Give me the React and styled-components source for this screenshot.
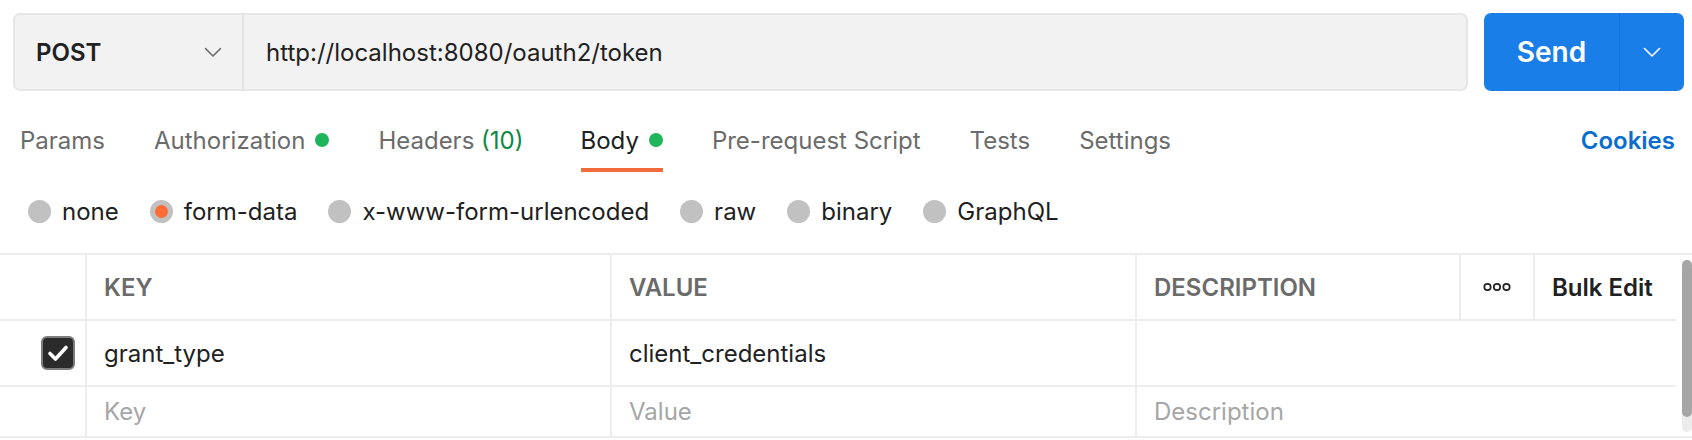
import React from 'react';
import styled, { createGlobalStyle } from 'styled-components';

const GlobalStyle = createGlobalStyle`
  html, body {
    margin: 0;
    padding: 0;
    background: #ffffff;
  }
  body {
    font-family: 'Inter', 'Noto Sans', sans-serif;
    color: #212121;
    overflow: hidden;
  }
`;

const Page = styled.div`
  width: 1692px;
  display: flex;
  flex-direction: column;
`;

const RequestBar = styled.div`
  display: flex;
  gap: 16px;
  padding: 13px 8px 0 13px;
  height: 78px;
`;

const UrlBox = styled.div`
  flex: 1;
  display: flex;
  background: #f2f2f2;
  border: 2px solid #e6e6e6;
  border-radius: 7px;
  box-sizing: border-box;
`;

const MethodSelect = styled.div`
  width: 229px;
  display: flex;
  align-items: center;
  justify-content: space-between;
  padding: 0 20px 0 21px;
  box-sizing: border-box;
  border-right: 2px solid #e3e3e3;
  font-size: 24px;
  font-weight: 600;
  color: #212121;
`;

const UrlText = styled.div`
  display: flex;
  align-items: center;
  padding-left: 22px;
  font-size: 24px;
  color: #212121;
`;

const SendButton = styled.div`
  width: 200px;
  display: flex;
  background: #1a7ee9;
  border-radius: 7px;
  color: #ffffff;
`;

const SendLabel = styled.div`
  width: 135px;
  display: flex;
  align-items: center;
  justify-content: center;
  font-size: 28px;
  font-weight: 600;
  border-right: 1px solid #1470d6;
`;

const SendMore = styled.div`
  flex: 1;
  display: flex;
  align-items: center;
  justify-content: center;
`;

const TabBar = styled.div`
  display: flex;
  align-items: stretch;
  height: 72px;
  margin-top: 9px;
  padding: 0 17px 0 20px;
`;

const Tab = styled.div`
  display: flex;
  align-items: center;
  gap: 10px;
  padding-top: 12px;
  margin-right: ${(p) => (p.wide ? 57 : 49)}px;
  font-size: 24px;
  color: ${(p) => (p.active ? '#212121' : '#6b6b6b')};
  border-bottom: 4px solid ${(p) => (p.active ? '#f26b3a' : 'transparent')};
  box-sizing: border-box;
`;

const Count = styled.span`
  color: #0b8a3e;
`;

const Dot = styled.span`
  width: 14px;
  height: 14px;
  border-radius: 50%;
  background: #1fb55b;
`;

const CookiesLink = styled.div`
  margin-left: auto;
  display: flex;
  align-items: center;
  padding-top: 12px;
  padding-bottom: 4px;
  font-size: 24px;
  font-weight: 600;
  color: #0b6dcf;
`;

const RadioRow = styled.div`
  display: flex;
  align-items: center;
  gap: 31px;
  height: 78px;
  padding: 0 0 3px 28px;
`;

const RadioOption = styled.div`
  display: flex;
  align-items: center;
  gap: 11px;
  font-size: 24px;
  color: #212121;
`;

const RadioCircle = styled.span`
  width: 23px;
  height: 23px;
  border-radius: 50%;
  background: ${(p) => (p.checked ? '#ff6c37' : '#c1c1c1')};
  border: ${(p) => (p.checked ? '5px solid #c1c1c1' : 'none')};
  box-sizing: border-box;
`;

const TableWrap = styled.div`
  display: flex;
  border-top: 2px solid #ededed;
  border-bottom: 2px solid #ededed;
`;

const Grid = styled.div`
  width: 1676px;
  display: grid;
  grid-template-columns: 85px 525px 525px 324px 74px 143px;
  grid-template-rows: 66px 66px 49px;
`;

const Cell = styled.div`
  display: flex;
  align-items: center;
  justify-content: ${(p) => (p.center ? 'center' : 'flex-start')};
  padding: ${(p) => (p.center ? '0' : '0 0 0 17px')};
  grid-column: ${(p) => (p.span ? `span ${p.span}` : 'auto')};
  border-left: ${(p) => (p.first ? 'none' : '2px solid #ededed')};
  border-bottom: ${(p) => (p.last ? 'none' : '2px solid #ededed')};
  font-size: 24px;
  color: #212121;
  box-sizing: border-box;
  overflow: hidden;
  white-space: nowrap;
`;

const HeadText = styled.span`
  font-weight: 600;
  color: ${(p) => (p.dark ? '#212121' : '#6b6b6b')};
`;

const Placeholder = styled.span`
  color: #a6a6a6;
`;

const CheckBox = styled.span`
  width: 34px;
  height: 34px;
  margin-left: 24px;
  border-radius: 6px;
  background: #2b2b2b;
  border: 2px solid #7d7d7d;
  box-sizing: border-box;
  display: flex;
  align-items: center;
  justify-content: center;
`;

const ScrollTrack = styled.div`
  flex: 1;
  display: flex;
  justify-content: flex-end;
  padding-top: 5px;
  padding-bottom: 4px;
`;

const ScrollRail = styled.div`
  width: 10px;
  height: 172px;
  background: #ececec;
  border-radius: 5px;
  display: flex;
`;

const ScrollThumb = styled.div`
  width: 10px;
  height: 157px;
  background: #a6a6a6;
  border-radius: 5px;
`;

const Chevron = ({ color, size = 18 }) => (
  <svg width={size} height={size / 2 + 2} viewBox="0 0 18 11" fill="none">
    <path d="M1.5 1.5 L9 9 L16.5 1.5" stroke={color} strokeWidth="1.6" strokeLinecap="round" strokeLinejoin="round" />
  </svg>
);

const Ellipsis = () => (
  <svg width="28" height="10" viewBox="0 0 28 10" fill="none">
    <circle cx="4.5" cy="5" r="3.2" stroke="#212121" strokeWidth="1.7" />
    <circle cx="14" cy="5" r="3.2" stroke="#212121" strokeWidth="1.7" />
    <circle cx="23.5" cy="5" r="3.2" stroke="#212121" strokeWidth="1.7" />
  </svg>
);

const Tick = () => (
  <svg width="22" height="18" viewBox="0 0 22 18" fill="none">
    <path d="M3 9.5 L8.5 15 L19 3.5" stroke="#ffffff" strokeWidth="3.6" strokeLinecap="round" strokeLinejoin="round" />
  </svg>
);

const tabs = [
  { label: 'Params' },
  { label: 'Authorization', dot: true },
  { label: 'Headers', count: '(10)', wide: true },
  { label: 'Body', dot: true, active: true },
  { label: 'Pre-request Script' },
  { label: 'Tests' },
  { label: 'Settings' },
];

const bodyTypes = ['none', 'form-data', 'x-www-form-urlencoded', 'raw', 'binary', 'GraphQL'];

export default function App() {
  return (
    <Page>
      <GlobalStyle />
      <RequestBar>
        <UrlBox>
          <MethodSelect>
            POST
            <Chevron color="#6b6b6b" />
          </MethodSelect>
          <UrlText>http://localhost:8080/oauth2/token</UrlText>
        </UrlBox>
        <SendButton>
          <SendLabel>Send</SendLabel>
          <SendMore>
            <Chevron color="#ffffff" />
          </SendMore>
        </SendButton>
      </RequestBar>

      <TabBar>
        {tabs.map((t) => (
          <Tab key={t.label} active={t.active} wide={t.wide}>
            <span>
              {t.label}
              {t.count && <Count> {t.count}</Count>}
            </span>
            {t.dot && <Dot />}
          </Tab>
        ))}
        <CookiesLink>Cookies</CookiesLink>
      </TabBar>

      <RadioRow>
        {bodyTypes.map((b) => (
          <RadioOption key={b}>
            <RadioCircle checked={b === 'form-data'} />
            {b}
          </RadioOption>
        ))}
      </RadioRow>

      <TableWrap>
        <Grid>
          <Cell first />
          <Cell><HeadText>KEY</HeadText></Cell>
          <Cell><HeadText>VALUE</HeadText></Cell>
          <Cell><HeadText>DESCRIPTION</HeadText></Cell>
          <Cell center><Ellipsis /></Cell>
          <Cell><HeadText dark>Bulk Edit</HeadText></Cell>

          <Cell first>
            <CheckBox><Tick /></CheckBox>
          </Cell>
          <Cell>grant_type</Cell>
          <Cell>client_credentials</Cell>
          <Cell span={3} />

          <Cell first last />
          <Cell last><Placeholder>Key</Placeholder></Cell>
          <Cell last><Placeholder>Value</Placeholder></Cell>
          <Cell last span={3}><Placeholder>Description</Placeholder></Cell>
        </Grid>
        <ScrollTrack>
          <ScrollRail>
            <ScrollThumb />
          </ScrollRail>
        </ScrollTrack>
      </TableWrap>
    </Page>
  );
}
